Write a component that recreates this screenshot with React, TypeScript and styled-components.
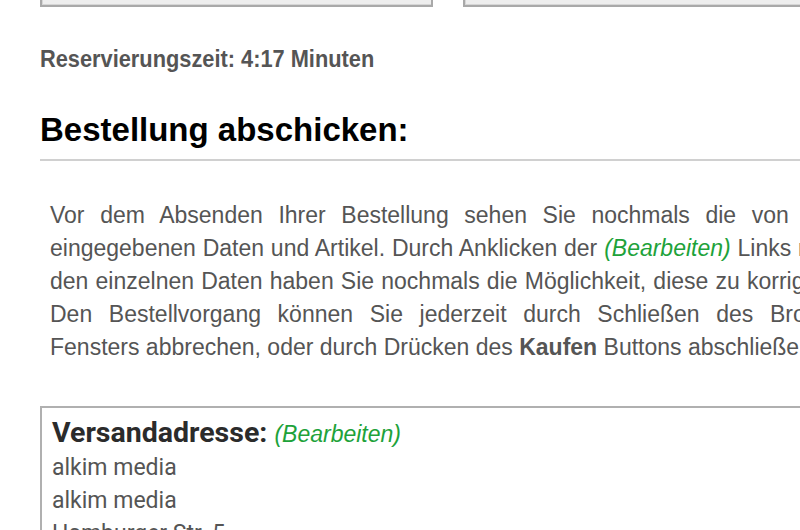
import React from "react";
import styled, { createGlobalStyle } from "styled-components";

const Global = createGlobalStyle`
  html, body { margin: 0; padding: 0; background: #ffffff; overflow: hidden; }
  body { width: 800px; height: 530px; }
`;

const Page = styled.div`
  width: 840px;
  margin-left: 40px;
  display: flex;
  flex-direction: column;
`;

const FieldRow = styled.div`
  display: flex;
  gap: 30px;
  margin-top: -33px;
`;

const FieldBox = styled.div`
  width: 393px;
  height: 40px;
  box-sizing: border-box;
  background: #eeeeee;
  border: 2px solid #a9a9a9;
  box-shadow: inset 0 -1px 0 #d6d6d6, inset 1px 0 0 #d6d6d6;
`;

const Timer = styled.div`
  margin-top: 38px;
  font-family: "Liberation Sans", Arial, sans-serif;
  font-weight: bold;
  font-size: 24px;
  color: #555555;
  line-height: 28px;
  transform: scaleX(0.908);
  transform-origin: left center;
`;

const Heading = styled.h1`
  margin: 38px 0 0;
  padding-bottom: 10px;
  border-bottom: 2px solid #d0d0d0;
  font-family: "Liberation Sans", Arial, sans-serif;
  font-weight: bold;
  font-size: 33px;
  color: #000000;
  line-height: 38px;
`;

const Intro = styled.p`
  margin: 38px 0 0;
  padding: 0 18px 0 10px;
  font-family: "Liberation Sans", Arial, sans-serif;
  font-size: 23px;
  line-height: 33px;
  color: #555555;
  text-align: justify;
`;

const EditLink = styled.span`
  font-style: italic;
  color: #1ea23a;
  font-family: "Liberation Sans", Arial, sans-serif;
  font-weight: normal;
  font-size: 23px;
`;

const Strong = styled.strong`
  font-weight: bold;
`;

const AddressBox = styled.div`
  margin-top: 42px;
  border: 2px solid #b0b0b0;
  padding: 8px 10px 20px;
  font-family: Roboto, "Liberation Sans", Arial, sans-serif;
`;

const AddressTitle = styled.div`
  font-family: Roboto, "Liberation Sans", Arial, sans-serif;
  font-weight: bold;
  font-size: 28.5px;
  line-height: 33px;
  color: #2b2b2b;
`;

const AddressLine = styled.div`
  font-size: 23px;
  line-height: 33px;
  color: #555555;
`;

export default function App() {
  return (
    <>
      <Global />
      <Page>
        <FieldRow>
          <FieldBox />
          <FieldBox />
        </FieldRow>
        <Timer>Reservierungszeit: 4:17 Minuten</Timer>
        <Heading>Bestellung abschicken:</Heading>
        <Intro>
          Vor dem Absenden Ihrer Bestellung sehen Sie nochmals die von Ihnen
          eingegebenen Daten und Artikel. Durch Anklicken der{" "}
          <EditLink>(Bearbeiten)</EditLink> Links neben den einzelnen Daten
          haben Sie nochmals die Möglichkeit, diese zu korrigieren. Den
          Bestellvorgang können Sie jederzeit durch Schließen des
          Browser-Fensters abbrechen, oder durch Drücken des{" "}
          <Strong>Kaufen</Strong> Buttons abschließen.
        </Intro>
        <AddressBox>
          <AddressTitle>
            Versandadresse: <EditLink>(Bearbeiten)</EditLink>
          </AddressTitle>
          <AddressLine>alkim media</AddressLine>
          <AddressLine>alkim media</AddressLine>
          <AddressLine>Hamburger Str. 5</AddressLine>
          <AddressLine>12345 Berlin</AddressLine>
        </AddressBox>
      </Page>
    </>
  );
}
